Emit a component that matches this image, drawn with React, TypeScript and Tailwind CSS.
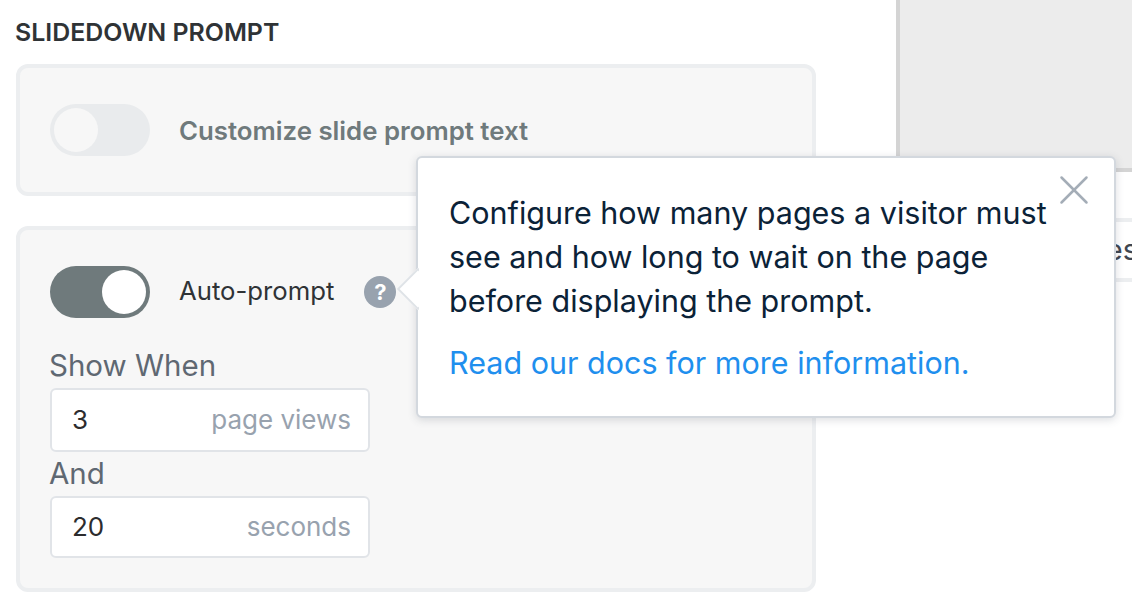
import React from "react";
import { X } from "lucide-react";

const font = "font-['Inter','Liberation_Sans',sans-serif]";

const Toggle = ({ on }: { on?: boolean }) => (
  <div
    className={`flex h-[52px] w-[100px] shrink-0 rounded-full p-1 ${
      on ? "justify-end bg-[#6f7a7c]" : "justify-start bg-[#e9ebed]"
    }`}
  >
    <div className={`h-11 w-11 rounded-full ${on ? "bg-white" : "bg-[#f7f7f7]"}`} />
  </div>
);

const NumberField = ({ value, unit, short }: { value: string; unit: string; short?: boolean }) => (
  <div
    className={`flex w-[320px] items-center justify-between rounded-md border-2 border-[#e1e4e8] bg-white pb-0.5 pl-5 pr-[17px] ${
      short ? "h-[62px]" : "h-[64px]"
    }`}
  >
    <span className="text-[26px] text-[#2c2c2e]">{value}</span>
    <span className="text-[26px] text-[#98a2ae]">{unit}</span>
  </div>
);

export default function App() {
  return (
    <div className={`${font} relative h-[614px] w-[1132px] overflow-hidden bg-white`}>
      <div className="flex h-full">
        <div className="w-[896px] shrink-0 pl-4 pt-[15px]">
          <h2 className="-ml-px text-[24.9px] leading-[34px] font-semibold text-[#2f3336]">SLIDEDOWN PROMPT</h2>

          <div className="mt-[15px] flex h-[132px] w-[800px] items-center gap-[29px] rounded-xl border-4 border-[#eceef0] bg-[#f7f7f7] pl-[30px]">
            <Toggle />
            <span className="pt-0.5 text-[25.8px] font-semibold text-[#6f7a7c]">Customize slide prompt text</span>
          </div>

          <div className="mt-[30px] h-[366px] w-[800px] rounded-xl border-4 border-[#eceef0] bg-[#f7f7f7] pl-[30px] pt-9">
            <div className="flex items-center">
              <Toggle on />
              <span className="ml-[29px] pb-0.5 text-[25.7px] text-[#2f3336]">Auto-prompt</span>
              <span className="ml-[30px] flex h-8 w-8 items-center justify-center rounded-full bg-[#98a2ae] text-[22px] font-bold text-white">?</span>
            </div>
            <div className="mt-[24px] -ml-px text-[29.5px] leading-[46px] text-[#5f6872]">Show When</div>
            <NumberField value="3" unit="page views" />
            <div className="-ml-px pb-0.5 text-[29.5px] leading-[42px] text-[#5f6872]">And</div>
            <NumberField value="20" unit="seconds" short />
          </div>
        </div>

        <div className="flex-1">
          <div className="h-[172px] border-b-4 border-l-4 border-[#d4d4d4] bg-[#ececec]" />
          <div className="mt-[46px] flex h-[64px] items-center justify-end overflow-hidden border-y-4 border-[#eceef0] text-[29px] text-[#3f4650]">
            <span className="-mr-1.5">es</span>
          </div>
        </div>
      </div>

      {/* help popover */}
      <div className="absolute left-[416px] top-[156px] h-[262px] w-[700px] rounded-md border-2 border-[#d3d8de] bg-white pl-[31px] pt-[33px] shadow-[0_2px_8px_rgba(60,70,90,0.18)]">
        <div className="absolute -left-[21px] top-[110px] h-[42px] w-[22px] overflow-hidden">
          <div className="absolute left-[6px] top-[6px] h-[30px] w-[30px] rotate-45 border-2 border-[#dfe3e7] bg-white" />
        </div>
        <X className="absolute right-[15px] top-[7px] h-[50px] w-[50px] text-[#a4adb7]" strokeWidth={1.2} />
        <p className="w-[620px] text-[30.5px] leading-[44px] text-[#0b2237]">
          Configure how many pages a visitor must see and how long to wait on the page before displaying the prompt.
        </p>
        <a className="mt-[18px] block text-[30.5px] leading-[44px] text-[#1f8fee]">Read our docs for more information.</a>
      </div>
    </div>
  );
}
